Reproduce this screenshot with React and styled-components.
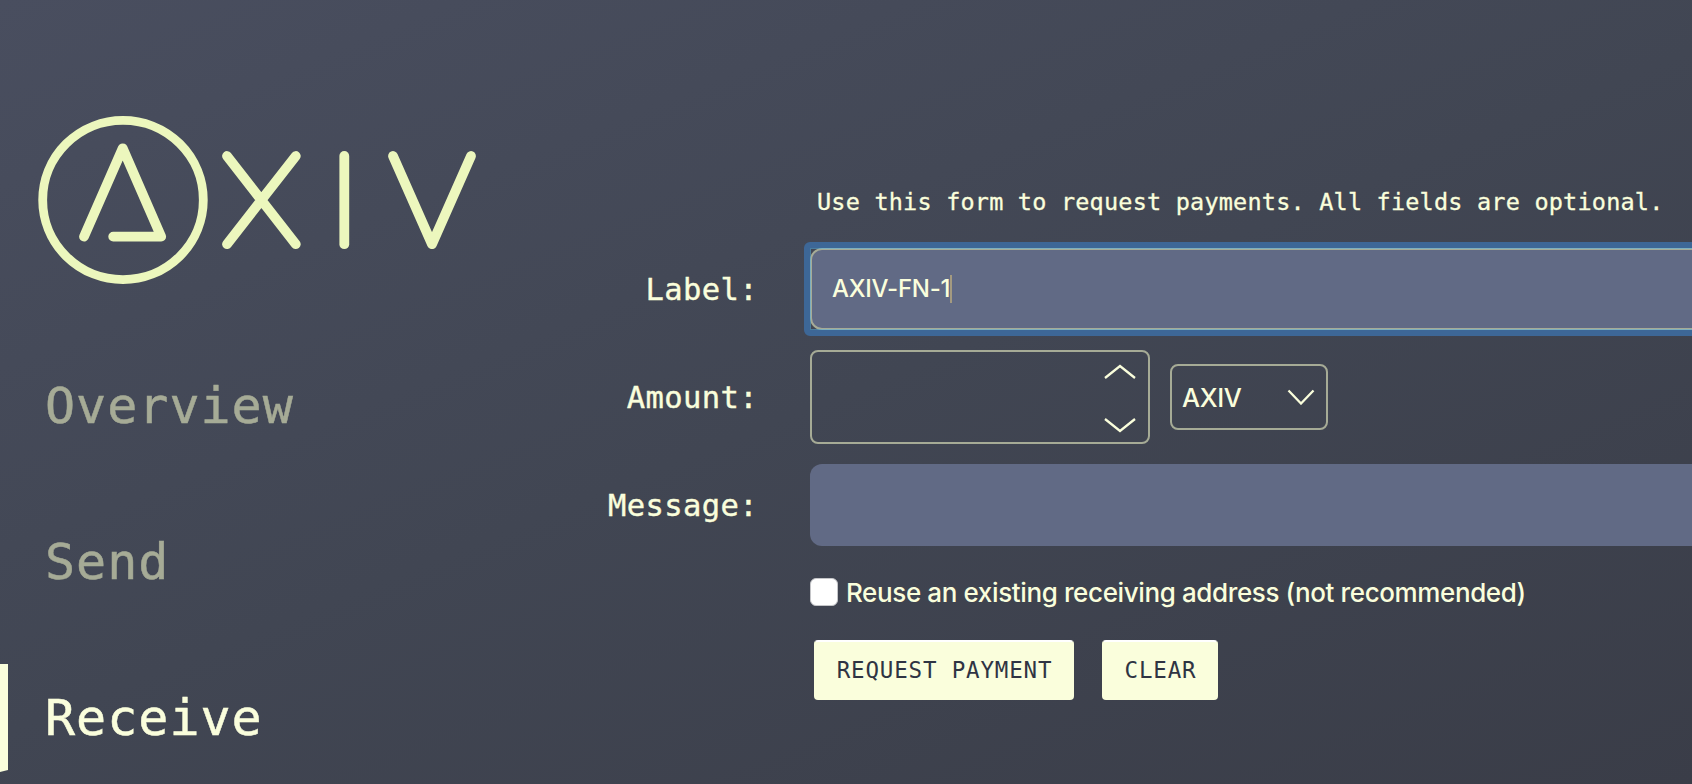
import React from "react";
import styled, { createGlobalStyle, css } from "styled-components";

const cream = "#fafedc";
const muted = "#a6ab96";
const mono = `"DejaVu Sans Mono", monospace`;
const sans = `Inter, "Liberation Sans", sans-serif`;

const GlobalStyle = createGlobalStyle`
  *, *::before, *::after { box-sizing: border-box; }
  body { margin: 0; overflow: hidden; }
`;

const Page = styled.div`
  display: flex;
  width: 1692px;
  height: 784px;
  overflow: hidden;
  color: ${cream};
  background: linear-gradient(158deg, #494e5f 0%, #414653 50%, #3a3d48 100%);
`;

const Sidebar = styled.aside`
  flex: 0 0 500px;
  padding-top: 110px;
`;

const LogoMark = styled.svg`
  display: block;
  margin-left: 30px;
  fill: none;
  stroke: #ecf7bd;
  stroke-width: 9.8;
  stroke-linecap: round;
  stroke-linejoin: round;
`;

const Nav = styled.nav`
  display: flex;
  flex-direction: column;
  gap: 48px;
  margin-top: 62px;
`;

const NavItem = styled.a`
  display: flex;
  align-items: center;
  height: 108px;
  padding: 2px 0 0 37px;
  border-left: 8px solid transparent;
  border-bottom: 2px solid transparent;
  font: 50px/1 ${mono};
  letter-spacing: 1px;
  -webkit-text-stroke: 0.5px currentColor;
  color: ${muted};
  ${(p) => p.$active && css`
    color: ${cream};
    border-left-color: ${cream};
  `}
`;

const Form = styled.form`
  flex: none;
  display: grid;
  grid-template-columns: 258px 1000px;
  grid-template-rows: 40px 82px 94px 82px 40px 60px;
  row-gap: 20px;
  column-gap: 52px;
  align-content: start;
  padding-top: 188px;
`;

const Intro = styled.p`
  grid-column: 2;
  margin: 0;
  padding-left: 7px;
  font: 23.5px/28px ${mono};
  letter-spacing: 0.2px;
  -webkit-text-stroke: 0.3px currentColor;
  white-space: nowrap;
`;

const FieldLabel = styled.label`
  align-self: center;
  justify-self: end;
  padding-top: 2px;
  font: 30.5px/40px ${mono};
  letter-spacing: 0.4px;
  -webkit-text-stroke: 0.4px currentColor;
`;

const TextField = styled.div`
  position: relative;
  display: flex;
  align-items: center;
  padding-left: 20px;
  border: 2px solid ${(p) => (p.$focused ? muted : "transparent")};
  border-radius: 12px;
  background: #616a85 border-box;
  font: 500 24px/30px ${sans};
  letter-spacing: -0.25px;
  ${(p) => p.$focused && css`
    &::after {
      content: "";
      position: absolute;
      inset: -8px;
      border: 6px solid #3d6797;
      border-radius: 6px;
      box-shadow: inset 0 0 0 1px rgba(84, 180, 230, 0.5);
    }
  `}
`;

const Caret = styled.span`
  width: 2px;
  height: 28px;
  background: #a49a80;
`;

const AmountRow = styled.div`
  display: flex;
  align-items: center;
  gap: 20px;
`;

const Outlined = styled.div`
  display: flex;
  border: 2px solid ${muted};
  border-radius: 8px;
`;

const Spinner = styled(Outlined)`
  flex-direction: column;
  align-items: flex-end;
  justify-content: space-between;
  width: 340px;
  height: 94px;
  padding: 12px 11px 9px 0;
`;

const UnitSelect = styled(Outlined)`
  align-items: center;
  justify-content: space-between;
  width: 158px;
  height: 66px;
  padding: 0 11px 0 10px;
  font: 500 25.5px/32px ${sans};
  letter-spacing: -0.4px;
`;

const UnitName = styled.span`
  padding-top: 2px;
`;

const Chevron = styled.svg`
  display: block;
  fill: none;
  stroke: ${cream};
  stroke-width: 2.3;
`;

const CheckRow = styled.label`
  grid-column: 2;
  display: flex;
  align-items: center;
  gap: 8px;
  margin-top: 12px;
  height: 28px;
  font: 500 26px/28px ${sans};
  letter-spacing: -0.38px;
  white-space: nowrap;
`;

const CheckText = styled.span`
  padding-top: 2px;
`;

const Checkbox = styled.span`
  width: 28px;
  height: 28px;
  border: 1px solid #c4c5c8;
  border-radius: 6px;
  background: #fff;
`;

const Actions = styled.div`
  grid-column: 2;
  display: flex;
  gap: 28px;
  margin: 14px 0 0 4px;
  height: 60px;
`;

const Button = styled.button`
  width: ${(p) => p.$width}px;
  height: 60px;
  padding: 0 0 0 1px;
  border: 2px solid ${cream};
  border-top-color: #fff;
  border-radius: 4px;
  background: ${cream};
  color: #2f3443;
  font: 22.5px/28px ${mono};
  letter-spacing: 0.82px;
  white-space: nowrap;
`;

function Logo() {
  return (
    <LogoMark width="460" height="180" viewBox="30 110 460 180">
      <ellipse cx="123" cy="200" rx="80.3" ry="79.6" strokeWidth="8.8" />
      <path d="M84 236.6 122.7 148.3 161.2 236.6H113.2" />
      <path d="M227 156 295.8 244.2M295.8 156 227 244.2" />
      <path d="M344.3 156V244.2" />
      <path d="M393 156 432 244.2 471 156" />
    </LogoMark>
  );
}

export default function App() {
  return (
    <Page>
      <GlobalStyle />
      <Sidebar>
        <Logo />
        <Nav>
          <NavItem>Overview</NavItem>
          <NavItem>Send</NavItem>
          <NavItem $active>Receive</NavItem>
        </Nav>
      </Sidebar>
      <Form>
        <Intro>Use this form to request payments. All fields are optional.</Intro>
        <FieldLabel>Label:</FieldLabel>
        <TextField $focused>
          AXIV-FN-1
          <Caret />
        </TextField>
        <FieldLabel>Amount:</FieldLabel>
        <AmountRow>
          <Spinner>
            <Chevron width="34" height="15" viewBox="0 0 34 15">
              <path d="M2 14 17 2 32 14" />
            </Chevron>
            <Chevron width="34" height="15" viewBox="0 0 34 15">
              <path d="M2 1 17 13 32 1" />
            </Chevron>
          </Spinner>
          <UnitSelect>
            <UnitName>AXIV</UnitName>
            <Chevron width="28" height="16" viewBox="0 0 28 16">
              <path d="M1.5 1.5 14 14.5 26.5 1.5" />
            </Chevron>
          </UnitSelect>
        </AmountRow>
        <FieldLabel>Message:</FieldLabel>
        <TextField />
        <CheckRow>
          <Checkbox />
          <CheckText>Reuse an existing receiving address (not recommended)</CheckText>
        </CheckRow>
        <Actions>
          <Button type="button" $width={260}>REQUEST PAYMENT</Button>
          <Button type="button" $width={116}>CLEAR</Button>
        </Actions>
      </Form>
    </Page>
  );
}
